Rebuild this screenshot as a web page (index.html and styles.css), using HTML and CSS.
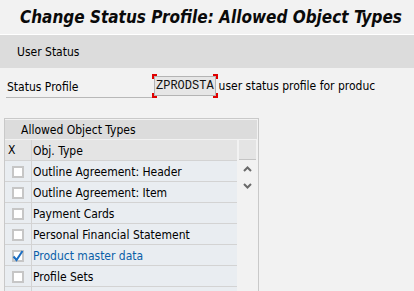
FILE: index.html
```html
<!DOCTYPE html>
<html lang="en">
<head>
    <meta charset="UTF-8">
    <title>Change Status Profile: Allowed Object Types</title>
    <link rel="stylesheet" href="styles.css">
</head>
<body>
    <div class="title-bar">
        <h1>Change Status Profile: Allowed Object Types</h1>
    </div>

    <div class="toolbar">
        <span class="toolbar-item">User Status</span>
    </div>

    <div class="field-row">
        <label class="field-label">Status Profile</label>
        <span class="field-focus"><span class="field-input">ZPRODSTA</span></span>
        <span class="field-desc">user status profile for produc</span>
    </div>

    <div class="panel">
        <div class="panel-title">Allowed Object Types</div>
        <div class="grid">
            <div class="cols">
                <div class="row head">
                    <div class="cell-x">X</div>
                    <div class="cell-text">Obj. Type</div>
                </div>
                <div class="row">
                    <div class="cell-x"><span class="check"></span></div>
                    <div class="cell-text">Outline Agreement: Header</div>
                </div>
                <div class="row">
                    <div class="cell-x"><span class="check"></span></div>
                    <div class="cell-text">Outline Agreement: Item</div>
                </div>
                <div class="row">
                    <div class="cell-x"><span class="check"></span></div>
                    <div class="cell-text">Payment Cards</div>
                </div>
                <div class="row">
                    <div class="cell-x"><span class="check"></span></div>
                    <div class="cell-text">Personal Financial Statement</div>
                </div>
                <div class="row selected">
                    <div class="cell-x">
                        <span class="check checked">
                            <svg width="12" height="12" viewBox="0 0 12 12"><path d="M1.5 6.5 L4.5 10 L10.5 1" fill="none" stroke="#1b6ec2" stroke-width="2"/></svg>
                        </span>
                    </div>
                    <div class="cell-text">Product master data</div>
                </div>
                <div class="row">
                    <div class="cell-x"><span class="check"></span></div>
                    <div class="cell-text">Profile Sets</div>
                </div>
                <div class="row">
                    <div class="cell-x"><span class="check"></span></div>
                    <div class="cell-text"></div>
                </div>
            </div>
            <div class="scroll">
                <div class="scroll-head"></div>
                <div class="scroll-btn">
                    <svg width="9" height="6" viewBox="0 0 9 6"><path d="M1 5 L4.5 1.5 L8 5" fill="none" stroke="#6a6a6a" stroke-width="2"/></svg>
                </div>
                <div class="scroll-btn">
                    <svg width="9" height="6" viewBox="0 0 9 6"><path d="M1 1 L4.5 4.5 L8 1" fill="none" stroke="#6a6a6a" stroke-width="2"/></svg>
                </div>
            </div>
        </div>
    </div>
</body>
</html>
```

FILE: styles.css
```css
:root {
    --page-bg: #f2f2f2;
    --band-bg: #dcdcdc;
    --head-bg: #e4e4e4;
    --row-bg: #e9edf1;
    --line: #c9c9c9;
}

body {
    margin: 0;
    background-color: var(--page-bg);
    font-family: 'DejaVu Sans Condensed', 'DejaVu Sans', sans-serif;
    font-size: 12px;
    color: #000;
    height: 291px;
    overflow: hidden;
}

.title-bar {
    height: 34px;
    display: flex;
    align-items: center;
    padding-left: 20px;
    border-bottom: 1px solid #ffffff;
}

.title-bar h1 {
    margin: 0;
    font-family: 'DejaVu Sans Condensed', 'DejaVu Sans', sans-serif;
    font-size: 17px;
    font-weight: bold;
    font-style: italic;
    color: #0a0a0a;
}

.toolbar {
    height: 33px;
    background-color: var(--band-bg);
    display: flex;
    align-items: center;
    padding-left: 17px;
}

.field-row {
    display: flex;
    align-items: center;
    margin-top: 6px;
    height: 24px;
    padding-left: 6px;
}

.field-label {
    width: 145px;
    padding-left: 1px;
    height: 20px;
    line-height: 20px;
    border-bottom: 1px solid #b8b8b8;
    margin-top: 2px;
}

.field-focus {
    padding: 2px;
    background:
        linear-gradient(#e00000, #e00000) left top / 5px 2px no-repeat,
        linear-gradient(#e00000, #e00000) left top / 2px 5px no-repeat,
        linear-gradient(#e00000, #e00000) right top / 5px 2px no-repeat,
        linear-gradient(#e00000, #e00000) right top / 2px 5px no-repeat,
        linear-gradient(#e00000, #e00000) left bottom / 5px 2px no-repeat,
        linear-gradient(#e00000, #e00000) left bottom / 2px 5px no-repeat,
        linear-gradient(#e00000, #e00000) right bottom / 5px 2px no-repeat,
        linear-gradient(#e00000, #e00000) right bottom / 2px 5px no-repeat;
}

.field-input {
    display: block;
    height: 18px;
    line-height: 19px;
    padding: 0 1px;
    border: 1px solid #b4b4b4;
    background-color: #e6e6e6;
    font-family: 'Liberation Mono', 'Courier New', monospace;
    font-size: 12px;
    color: #111;
}

.field-desc {
    margin-left: 1px;
}

.panel {
    margin: 20px 0 0 4px;
    width: 253px;
    border: 1px solid var(--line);
    border-bottom: none;
    padding: 1px 0 0;
}

.panel-title {
    height: 19px;
    line-height: 21px;
    background-color: var(--band-bg);
    padding-left: 16px;
    margin-right: 1px;
}

.grid {
    display: flex;
    margin-top: 1px;
}

.cols {
    width: 232px;
}

.row {
    display: flex;
    height: 20px;
    border-bottom: 1px solid #d3d3d3;
    background-color: var(--row-bg);
}

.row.head {
    background-color: var(--head-bg);
}

.cell-x {
    width: 26px;
    display: flex;
    align-items: center;
    padding-left: 3px;
    box-sizing: border-box;
}

.row:not(.head) .cell-x {
    padding-left: 7px;
    padding-top: 1px;
}

.cell-text {
    flex: 1;
    border-left: 1px solid #d3d3d3;
    padding-left: 1px;
    line-height: 22px;
    white-space: nowrap;
    overflow: hidden;
}

.check {
    width: 8px;
    height: 8px;
    border: 2px solid #c6c6c6;
    background-color: #fff;
    display: flex;
    align-items: center;
    justify-content: center;
}

.check svg {
    flex-shrink: 0;
}

.row.selected .cell-text {
    color: #0a5fa8;
}

.scroll {
    width: 17px;
    margin-left: 2px;
}

.scroll-head {
    height: 19px;
    background-color: var(--head-bg);
    border-bottom: 1px solid #c4c4c4;
}

.scroll-btn {
    height: 17px;
    display: flex;
    align-items: center;
    justify-content: center;
}

.scroll-btn:first-of-type {
    margin-top: 2px;
}
```
